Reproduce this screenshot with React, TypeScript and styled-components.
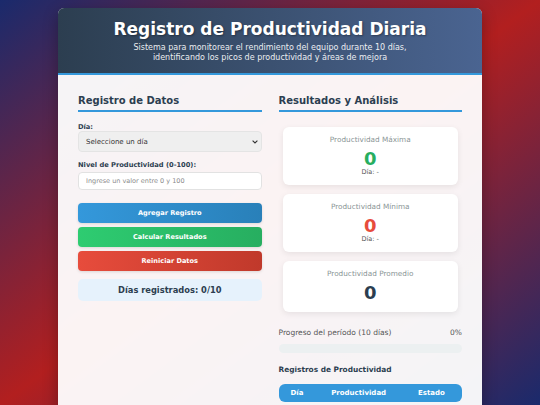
import React from 'react';
import styled, { createGlobalStyle } from 'styled-components';

const GlobalStyle = createGlobalStyle`
  html, body {
    margin: 0;
    padding: 0;
  }
  body {
    min-height: 100vh;
    font-family: "DejaVu Sans", Verdana, sans-serif;
    background-color: #1a2a6c;
    background-image: linear-gradient(to bottom right, #1a2a6c, #b21f1f, #1a2a6c);
    background-size: 100% 405px;
    background-repeat: no-repeat;
  }
`;

const chevron =
  "url(\"data:image/svg+xml,%3Csvg xmlns='http://www.w3.org/2000/svg' width='6' height='4' viewBox='0 0 6 4'%3E%3Cpath d='M0.6 0.6 L3 3 L5.4 0.6' fill='none' stroke='%23333' stroke-width='1.1'/%3E%3C/svg%3E\")";

const Page = styled.div`
  padding: 8px 0;
`;

const Container = styled.div`
  width: 424px;
  margin: 0 auto;
  border-radius: 6px;
  overflow: hidden;
  background: rgba(255, 255, 255, 0.95);
  box-shadow: 0 5px 15px rgba(0, 0, 0, 0.3);
`;

const Header = styled.header`
  background: linear-gradient(to right, #2c3e50, #4a6491);
  color: #fff;
  text-align: center;
  padding: 12px 15px 11px;
  border-bottom: 2px solid #3498db;
`;

const Title = styled.h1`
  margin: 0 0 4px;
  font-size: 17px;
  line-height: 19px;
  text-shadow: 1px 1px 2px rgba(0, 0, 0, 0.35);
`;

const Subtitle = styled.p`
  margin: 0 auto;
  max-width: 290px;
  font-size: 8px;
  line-height: 9.7px;
  opacity: 0.9;
`;

const Main = styled.main`
  display: grid;
  grid-template-columns: 1fr 1fr;
  gap: 17px;
  padding: 20px 20px 30px;
`;

const Column = styled.section`
  display: flex;
  flex-direction: column;
`;

const SectionTitle = styled.h2`
  margin: 0 0 11px;
  padding-bottom: 3px;
  font-size: 10px;
  line-height: 12px;
  color: #2c3e50;
  border-bottom: 2px solid #3498db;
`;

const FormGroup = styled.div`
  display: flex;
  flex-direction: column;
  margin-bottom: 9px;
`;

const Label = styled.label<{ $gap?: number }>`
  font-size: 6.7px;
  line-height: 8px;
  font-weight: bold;
  color: #2c3e50;
  margin-bottom: ${(p) => p.$gap ?? 0}px;
`;

const Select = styled.select`
  appearance: none;
  height: 21px;
  padding: 0 7px;
  font-family: inherit;
  font-size: 7px;
  color: #333;
  background: #efefef ${chevron} no-repeat right 3px center;
  border: 1px solid #e4e4e4;
  border-radius: 4px;
`;

const Input = styled.input`
  height: 18.5px;
  box-sizing: border-box;
  padding: 0 7px;
  font-family: inherit;
  font-size: 6.5px;
  border: 1px solid #e2e2e2;
  border-radius: 4px;
  background: #fff;
  &::placeholder {
    color: #8a8a8a;
  }
`;

const Buttons = styled.div`
  display: flex;
  flex-direction: column;
  gap: 4.5px;
  margin-top: 4px;
`;

const tones = {
  blue: ['#3498db', '#2980b9'],
  green: ['#2ecc71', '#27ae60'],
  red: ['#e74c3c', '#c0392b'],
};

const Button = styled.button<{ $tone: keyof typeof tones }>`
  height: 19.5px;
  border: none;
  border-radius: 4px;
  color: #fff;
  font-family: inherit;
  font-size: 6.6px;
  font-weight: bold;
  background: linear-gradient(
    to right,
    ${(p) => tones[p.$tone][0]},
    ${(p) => tones[p.$tone][1]}
  );
  box-shadow: 0 1px 3px rgba(0, 0, 0, 0.12);
  cursor: pointer;
`;

const Counter = styled.div`
  margin-top: 8px;
  height: 22px;
  display: flex;
  align-items: center;
  justify-content: center;
  background: #e6f2fc;
  border-radius: 5px;
  font-size: 8.3px;
  font-weight: bold;
  color: #2c3e50;
`;

const Stats = styled.div`
  display: flex;
  flex-direction: column;
  gap: 9px;
  padding: 4px 4px 0;
`;

const StatCard = styled.div`
  padding: 9px;
  background: #fff;
  border-radius: 6px;
  text-align: center;
  box-shadow: 0 2px 6px rgba(0, 0, 0, 0.08);
`;

const StatTitle = styled.div`
  font-size: 7.3px;
  line-height: 8.5px;
  color: #8a9596;
  margin-bottom: 3px;
`;

const StatValue = styled.div<{ $color: string }>`
  font-size: 18px;
  line-height: 21px;
  font-weight: bold;
  color: ${(p) => p.$color};
`;

const StatDay = styled.div`
  font-size: 6.5px;
  line-height: 7.5px;
  color: #555;
`;

const ProgressRow = styled.div`
  display: flex;
  justify-content: space-between;
  margin-top: 16.5px;
  font-size: 7.5px;
  line-height: 9px;
  color: #555;
`;

const ProgressTrack = styled.div`
  margin-top: 6.5px;
  height: 9px;
  border-radius: 5px;
  background: #ecf0f1;
  overflow: hidden;
`;

const ProgressFill = styled.div`
  height: 100%;
  background: linear-gradient(to right, #3498db, #2ecc71);
`;

const SubTitle = styled.h3`
  margin: 12.7px 0 0;
  font-size: 7.4px;
  line-height: 8.6px;
  color: #2c3e50;
`;

const Table = styled.table`
  margin-top: 10px;
  width: 100%;
  border-collapse: collapse;
  border-radius: 6px;
  overflow: hidden;
`;

const Th = styled.th`
  padding: 5px 12px;
  background: #3498db;
  color: #fff;
  font-size: 7px;
  line-height: 8px;
  text-align: left;
`;

const App = () => {
  const registered = 0;
  const total = 10;
  const progress = (registered / total) * 100;

  return (
    <>
      <GlobalStyle />
      <Page>
        <Container>
          <Header>
            <Title>Registro de Productividad Diaria</Title>
            <Subtitle>
              Sistema para monitorear el rendimiento del equipo durante 10 días,
              identificando los picos de productividad y áreas de mejora
            </Subtitle>
          </Header>
          <Main>
            <Column>
              <SectionTitle>Registro de Datos</SectionTitle>
              <FormGroup>
                <Label htmlFor="dia">Día:</Label>
                <Select id="dia" defaultValue="">
                  <option value="">Seleccione un día</option>
                  {Array.from({ length: total }, (_, i) => (
                    <option key={i} value={i + 1}>
                      Día {i + 1}
                    </option>
                  ))}
                </Select>
              </FormGroup>
              <FormGroup>
                <Label htmlFor="nivel" $gap={2.5}>
                  Nivel de Productividad (0-100):
                </Label>
                <Input id="nivel" type="number" placeholder="Ingrese un valor entre 0 y 100" />
              </FormGroup>
              <Buttons>
                <Button $tone="blue">Agregar Registro</Button>
                <Button $tone="green">Calcular Resultados</Button>
                <Button $tone="red">Reiniciar Datos</Button>
              </Buttons>
              <Counter>
                Días registrados: {registered}/{total}
              </Counter>
            </Column>
            <Column>
              <SectionTitle>Resultados y Análisis</SectionTitle>
              <Stats>
                <StatCard>
                  <StatTitle>Productividad Máxima</StatTitle>
                  <StatValue $color="#27ae60">0</StatValue>
                  <StatDay>Día: -</StatDay>
                </StatCard>
                <StatCard>
                  <StatTitle>Productividad Mínima</StatTitle>
                  <StatValue $color="#e74c3c">0</StatValue>
                  <StatDay>Día: -</StatDay>
                </StatCard>
                <StatCard>
                  <StatTitle>Productividad Promedio</StatTitle>
                  <StatValue $color="#2c3e50">0</StatValue>
                </StatCard>
              </Stats>
              <ProgressRow>
                <span>Progreso del período (10 días)</span>
                <span>{progress}%</span>
              </ProgressRow>
              <ProgressTrack>
                <ProgressFill style={{ width: `${progress}%` }} />
              </ProgressTrack>
              <SubTitle>Registros de Productividad</SubTitle>
              <Table>
                <thead>
                  <tr>
                    <Th>Día</Th>
                    <Th>Productividad</Th>
                    <Th>Estado</Th>
                  </tr>
                </thead>
                <tbody />
              </Table>
            </Column>
          </Main>
        </Container>
      </Page>
    </>
  );
};

export default App;
